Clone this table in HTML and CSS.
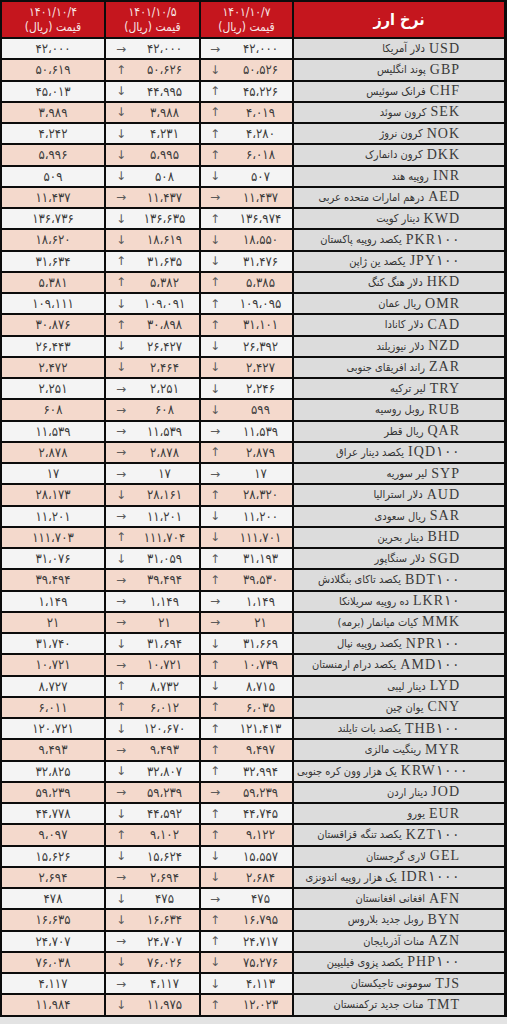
FILE: index.html
```html
<!DOCTYPE html>
<html lang="fa">
<head>
<meta charset="utf-8">
<title>نرخ ارز</title>
<link rel="stylesheet" href="styles.css">
</head>
<body>
<div class="board">
  <div class="row head">
    <div class="h"><span>۱۴۰۱/۱۰/۴</span><span class="sub">قیمت (ریال)</span></div>
    <div class="h"><span>۱۴۰۱/۱۰/۵</span><span class="sub">قیمت (ریال)</span></div>
    <div class="h"><span>۱۴۰۱/۱۰/۷</span><span class="sub">قیمت (ریال)</span></div>
    <div class="h title">نرخ ارز</div>
  </div>
  <div class="row odd"><div class="c v">۴۲،۰۰۰</div><div class="c a a2"><span class="ar">→</span><span class="n">۴۲،۰۰۰</span></div><div class="c a a3"><span class="ar">→</span><span class="n">۴۲،۰۰۰</span></div><div class="c name"><span class="code">USD</span><span class="fa">دلار آمریکا</span></div></div>
  <div class="row even"><div class="c v">۵۰،۶۱۹</div><div class="c a a2"><span class="ar">↑</span><span class="n">۵۰،۶۲۶</span></div><div class="c a a3"><span class="ar">↓</span><span class="n">۵۰،۵۲۶</span></div><div class="c name"><span class="code">GBP</span><span class="fa">پوند انگلیس</span></div></div>
  <div class="row odd"><div class="c v">۴۵،۰۱۳</div><div class="c a a2"><span class="ar">↓</span><span class="n">۴۴،۹۹۵</span></div><div class="c a a3"><span class="ar">↑</span><span class="n">۴۵،۲۲۶</span></div><div class="c name"><span class="code">CHF</span><span class="fa">فرانک سوئیس</span></div></div>
  <div class="row even"><div class="c v">۳،۹۸۹</div><div class="c a a2"><span class="ar">↓</span><span class="n">۳،۹۸۸</span></div><div class="c a a3"><span class="ar">↑</span><span class="n">۴،۰۱۹</span></div><div class="c name"><span class="code">SEK</span><span class="fa">کرون سوئد</span></div></div>
  <div class="row odd"><div class="c v">۴،۲۴۲</div><div class="c a a2"><span class="ar">↓</span><span class="n">۴،۲۳۱</span></div><div class="c a a3"><span class="ar">↑</span><span class="n">۴،۲۸۰</span></div><div class="c name"><span class="code">NOK</span><span class="fa">کرون نروژ</span></div></div>
  <div class="row even"><div class="c v">۵،۹۹۶</div><div class="c a a2"><span class="ar">↓</span><span class="n">۵،۹۹۵</span></div><div class="c a a3"><span class="ar">↑</span><span class="n">۶،۰۱۸</span></div><div class="c name"><span class="code">DKK</span><span class="fa">کرون دانمارک</span></div></div>
  <div class="row odd"><div class="c v">۵۰۹</div><div class="c a a2"><span class="ar">↓</span><span class="n">۵۰۸</span></div><div class="c a a3"><span class="ar">↓</span><span class="n">۵۰۷</span></div><div class="c name"><span class="code">INR</span><span class="fa">روپیه هند</span></div></div>
  <div class="row even"><div class="c v">۱۱،۴۳۷</div><div class="c a a2"><span class="ar">→</span><span class="n">۱۱،۴۳۷</span></div><div class="c a a3"><span class="ar">→</span><span class="n">۱۱،۴۳۷</span></div><div class="c name"><span class="code">AED</span><span class="fa">درهم امارات متحده عربی</span></div></div>
  <div class="row odd"><div class="c v">۱۳۶،۷۳۶</div><div class="c a a2"><span class="ar">↓</span><span class="n">۱۳۶،۶۳۵</span></div><div class="c a a3"><span class="ar">↑</span><span class="n">۱۳۶،۹۷۴</span></div><div class="c name"><span class="code">KWD</span><span class="fa">دینار کویت</span></div></div>
  <div class="row even"><div class="c v">۱۸،۶۲۰</div><div class="c a a2"><span class="ar">↓</span><span class="n">۱۸،۶۱۹</span></div><div class="c a a3"><span class="ar">↓</span><span class="n">۱۸،۵۵۰</span></div><div class="c name"><span class="code">PKR۱۰۰</span><span class="fa">یکصد روپیه پاکستان</span></div></div>
  <div class="row odd"><div class="c v">۳۱،۶۳۴</div><div class="c a a2"><span class="ar">↑</span><span class="n">۳۱،۶۳۵</span></div><div class="c a a3"><span class="ar">↓</span><span class="n">۳۱،۴۷۶</span></div><div class="c name"><span class="code">JPY۱۰۰</span><span class="fa">یکصد ین ژاپن</span></div></div>
  <div class="row even"><div class="c v">۵،۳۸۱</div><div class="c a a2"><span class="ar">↑</span><span class="n">۵،۳۸۲</span></div><div class="c a a3"><span class="ar">↑</span><span class="n">۵،۳۸۵</span></div><div class="c name"><span class="code">HKD</span><span class="fa">دلار هنگ کنگ</span></div></div>
  <div class="row odd"><div class="c v">۱۰۹،۱۱۱</div><div class="c a a2"><span class="ar">↓</span><span class="n">۱۰۹،۰۹۱</span></div><div class="c a a3"><span class="ar">↑</span><span class="n">۱۰۹،۰۹۵</span></div><div class="c name"><span class="code">OMR</span><span class="fa">ریال عمان</span></div></div>
  <div class="row even"><div class="c v">۳۰،۸۷۶</div><div class="c a a2"><span class="ar">↑</span><span class="n">۳۰،۸۹۸</span></div><div class="c a a3"><span class="ar">↑</span><span class="n">۳۱،۱۰۱</span></div><div class="c name"><span class="code">CAD</span><span class="fa">دلار کانادا</span></div></div>
  <div class="row odd"><div class="c v">۲۶،۴۴۳</div><div class="c a a2"><span class="ar">↓</span><span class="n">۲۶،۴۲۷</span></div><div class="c a a3"><span class="ar">↓</span><span class="n">۲۶،۳۹۲</span></div><div class="c name"><span class="code">NZD</span><span class="fa">دلار نیوزیلند</span></div></div>
  <div class="row even"><div class="c v">۲،۴۷۲</div><div class="c a a2"><span class="ar">↓</span><span class="n">۲،۴۶۴</span></div><div class="c a a3"><span class="ar">↓</span><span class="n">۲،۴۲۷</span></div><div class="c name"><span class="code">ZAR</span><span class="fa">راند افریقای جنوبی</span></div></div>
  <div class="row odd"><div class="c v">۲،۲۵۱</div><div class="c a a2"><span class="ar">→</span><span class="n">۲،۲۵۱</span></div><div class="c a a3"><span class="ar">↓</span><span class="n">۲،۲۴۶</span></div><div class="c name"><span class="code">TRY</span><span class="fa">لیر ترکیه</span></div></div>
  <div class="row even"><div class="c v">۶۰۸</div><div class="c a a2"><span class="ar">→</span><span class="n">۶۰۸</span></div><div class="c a a3"><span class="ar">↓</span><span class="n">۵۹۹</span></div><div class="c name"><span class="code">RUB</span><span class="fa">روبل روسیه</span></div></div>
  <div class="row odd"><div class="c v">۱۱،۵۳۹</div><div class="c a a2"><span class="ar">→</span><span class="n">۱۱،۵۳۹</span></div><div class="c a a3"><span class="ar">→</span><span class="n">۱۱،۵۳۹</span></div><div class="c name"><span class="code">QAR</span><span class="fa">ریال قطر</span></div></div>
  <div class="row even"><div class="c v">۲،۸۷۸</div><div class="c a a2"><span class="ar">→</span><span class="n">۲،۸۷۸</span></div><div class="c a a3"><span class="ar">↑</span><span class="n">۲،۸۷۹</span></div><div class="c name"><span class="code">IQD۱۰۰</span><span class="fa">یکصد دینار عراق</span></div></div>
  <div class="row odd"><div class="c v">۱۷</div><div class="c a a2"><span class="ar">→</span><span class="n">۱۷</span></div><div class="c a a3"><span class="ar">→</span><span class="n">۱۷</span></div><div class="c name"><span class="code">SYP</span><span class="fa">لیر سوریه</span></div></div>
  <div class="row even"><div class="c v">۲۸،۱۷۳</div><div class="c a a2"><span class="ar">↓</span><span class="n">۲۸،۱۶۱</span></div><div class="c a a3"><span class="ar">↑</span><span class="n">۲۸،۳۲۰</span></div><div class="c name"><span class="code">AUD</span><span class="fa">دلار استرالیا</span></div></div>
  <div class="row odd"><div class="c v">۱۱،۲۰۱</div><div class="c a a2"><span class="ar">→</span><span class="n">۱۱،۲۰۱</span></div><div class="c a a3"><span class="ar">↓</span><span class="n">۱۱،۲۰۰</span></div><div class="c name"><span class="code">SAR</span><span class="fa">ریال سعودی</span></div></div>
  <div class="row even"><div class="c v">۱۱۱،۷۰۳</div><div class="c a a2"><span class="ar">↑</span><span class="n">۱۱۱،۷۰۴</span></div><div class="c a a3"><span class="ar">↓</span><span class="n">۱۱۱،۷۰۱</span></div><div class="c name"><span class="code">BHD</span><span class="fa">دینار بحرین</span></div></div>
  <div class="row odd"><div class="c v">۳۱،۰۷۶</div><div class="c a a2"><span class="ar">↓</span><span class="n">۳۱،۰۵۹</span></div><div class="c a a3"><span class="ar">↑</span><span class="n">۳۱،۱۹۳</span></div><div class="c name"><span class="code">SGD</span><span class="fa">دلار سنگاپور</span></div></div>
  <div class="row even"><div class="c v">۳۹،۴۹۴</div><div class="c a a2"><span class="ar">→</span><span class="n">۳۹،۴۹۴</span></div><div class="c a a3"><span class="ar">↑</span><span class="n">۳۹،۵۳۰</span></div><div class="c name"><span class="code">BDT۱۰۰</span><span class="fa">یکصد تاکای بنگلادش</span></div></div>
  <div class="row odd"><div class="c v">۱،۱۴۹</div><div class="c a a2"><span class="ar">→</span><span class="n">۱،۱۴۹</span></div><div class="c a a3"><span class="ar">→</span><span class="n">۱،۱۴۹</span></div><div class="c name"><span class="code">LKR۱۰</span><span class="fa">ده روپیه سریلانکا</span></div></div>
  <div class="row even"><div class="c v">۲۱</div><div class="c a a2"><span class="ar">→</span><span class="n">۲۱</span></div><div class="c a a3"><span class="ar">→</span><span class="n">۲۱</span></div><div class="c name"><span class="code">MMK</span><span class="fa">کیات میانمار (برمه)</span></div></div>
  <div class="row odd"><div class="c v">۳۱،۷۴۰</div><div class="c a a2"><span class="ar">↓</span><span class="n">۳۱،۶۹۴</span></div><div class="c a a3"><span class="ar">↓</span><span class="n">۳۱،۶۶۹</span></div><div class="c name"><span class="code">NPR۱۰۰</span><span class="fa">یکصد روپیه نپال</span></div></div>
  <div class="row even"><div class="c v">۱۰،۷۲۱</div><div class="c a a2"><span class="ar">→</span><span class="n">۱۰،۷۲۱</span></div><div class="c a a3"><span class="ar">↑</span><span class="n">۱۰،۷۳۹</span></div><div class="c name"><span class="code">AMD۱۰۰</span><span class="fa">یکصد درام ارمنستان</span></div></div>
  <div class="row odd"><div class="c v">۸،۷۲۷</div><div class="c a a2"><span class="ar">↑</span><span class="n">۸،۷۳۲</span></div><div class="c a a3"><span class="ar">↓</span><span class="n">۸،۷۱۵</span></div><div class="c name"><span class="code">LYD</span><span class="fa">دینار لیبی</span></div></div>
  <div class="row even"><div class="c v">۶،۰۱۱</div><div class="c a a2"><span class="ar">↑</span><span class="n">۶،۰۱۲</span></div><div class="c a a3"><span class="ar">↑</span><span class="n">۶،۰۳۵</span></div><div class="c name"><span class="code">CNY</span><span class="fa">یوان چین</span></div></div>
  <div class="row odd"><div class="c v">۱۲۰،۷۲۱</div><div class="c a a2"><span class="ar">↓</span><span class="n">۱۲۰،۶۷۰</span></div><div class="c a a3"><span class="ar">↑</span><span class="n">۱۲۱،۴۱۳</span></div><div class="c name"><span class="code">THB۱۰۰</span><span class="fa">یکصد بات تایلند</span></div></div>
  <div class="row even"><div class="c v">۹،۴۹۳</div><div class="c a a2"><span class="ar">→</span><span class="n">۹،۴۹۳</span></div><div class="c a a3"><span class="ar">↑</span><span class="n">۹،۴۹۷</span></div><div class="c name"><span class="code">MYR</span><span class="fa">رینگیت مالزی</span></div></div>
  <div class="row odd"><div class="c v">۳۲،۸۲۵</div><div class="c a a2"><span class="ar">↓</span><span class="n">۳۲،۸۰۷</span></div><div class="c a a3"><span class="ar">↑</span><span class="n">۳۲،۹۹۴</span></div><div class="c name"><span class="code">KRW۱۰۰۰</span><span class="fa">یک هزار وون کره جنوبی</span></div></div>
  <div class="row even"><div class="c v">۵۹،۲۳۹</div><div class="c a a2"><span class="ar">→</span><span class="n">۵۹،۲۳۹</span></div><div class="c a a3"><span class="ar">→</span><span class="n">۵۹،۲۳۹</span></div><div class="c name"><span class="code">JOD</span><span class="fa">دینار اردن</span></div></div>
  <div class="row odd"><div class="c v">۴۴،۷۷۸</div><div class="c a a2"><span class="ar">↓</span><span class="n">۴۴،۵۹۲</span></div><div class="c a a3"><span class="ar">↑</span><span class="n">۴۴،۷۴۵</span></div><div class="c name"><span class="code">EUR</span><span class="fa">یورو</span></div></div>
  <div class="row even"><div class="c v">۹،۰۹۷</div><div class="c a a2"><span class="ar">↑</span><span class="n">۹،۱۰۲</span></div><div class="c a a3"><span class="ar">↑</span><span class="n">۹،۱۲۲</span></div><div class="c name"><span class="code">KZT۱۰۰</span><span class="fa">یکصد تنگه قزاقستان</span></div></div>
  <div class="row odd"><div class="c v">۱۵،۶۲۶</div><div class="c a a2"><span class="ar">↓</span><span class="n">۱۵،۶۲۴</span></div><div class="c a a3"><span class="ar">↓</span><span class="n">۱۵،۵۵۷</span></div><div class="c name"><span class="code">GEL</span><span class="fa">لاری گرجستان</span></div></div>
  <div class="row even"><div class="c v">۲،۶۹۴</div><div class="c a a2"><span class="ar">→</span><span class="n">۲،۶۹۴</span></div><div class="c a a3"><span class="ar">↓</span><span class="n">۲،۶۸۴</span></div><div class="c name"><span class="code">IDR۱۰۰۰</span><span class="fa">یک هزار روپیه اندونزی</span></div></div>
  <div class="row odd"><div class="c v">۴۷۸</div><div class="c a a2"><span class="ar">↓</span><span class="n">۴۷۵</span></div><div class="c a a3"><span class="ar">→</span><span class="n">۴۷۵</span></div><div class="c name"><span class="code">AFN</span><span class="fa">افغانی افغانستان</span></div></div>
  <div class="row even"><div class="c v">۱۶،۶۳۵</div><div class="c a a2"><span class="ar">↓</span><span class="n">۱۶،۶۳۴</span></div><div class="c a a3"><span class="ar">↑</span><span class="n">۱۶،۷۹۵</span></div><div class="c name"><span class="code">BYN</span><span class="fa">روبل جدید بلاروس</span></div></div>
  <div class="row odd"><div class="c v">۲۴،۷۰۷</div><div class="c a a2"><span class="ar">→</span><span class="n">۲۴،۷۰۷</span></div><div class="c a a3"><span class="ar">↑</span><span class="n">۲۴،۷۱۷</span></div><div class="c name"><span class="code">AZN</span><span class="fa">منات آذربایجان</span></div></div>
  <div class="row even"><div class="c v">۷۶،۰۳۸</div><div class="c a a2"><span class="ar">↓</span><span class="n">۷۶،۰۲۶</span></div><div class="c a a3"><span class="ar">↓</span><span class="n">۷۵،۲۷۶</span></div><div class="c name"><span class="code">PHP۱۰۰</span><span class="fa">یکصد پزوی فیلیپین</span></div></div>
  <div class="row odd"><div class="c v">۴،۱۱۷</div><div class="c a a2"><span class="ar">→</span><span class="n">۴،۱۱۷</span></div><div class="c a a3"><span class="ar">↓</span><span class="n">۴،۱۱۳</span></div><div class="c name"><span class="code">TJS</span><span class="fa">سومونی تاجیکستان</span></div></div>
  <div class="row even"><div class="c v">۱۱،۹۸۴</div><div class="c a a2"><span class="ar">↓</span><span class="n">۱۱،۹۷۵</span></div><div class="c a a3"><span class="ar">↑</span><span class="n">۱۲،۰۲۳</span></div><div class="c name"><span class="code">TMT</span><span class="fa">منات جدید ترکمنستان</span></div></div>
</div>
</body>
</html>
```

FILE: styles.css
```css
html, body {
  margin: 0;
  padding: 0;
}
body {
  background: #e3e3e3;
  width: 507px;
  font-family: "DejaVu Sans Condensed", "DejaVu Sans", sans-serif;
  color: #3b3b3b;
}
.board {
  display: flex;
  flex-direction: column;
  gap: 2px;
  background: #0c0c0c;
  padding: 2px 3px 2px 2px;
}
.row {
  display: grid;
  grid-template-columns: 102px 93px 91px 210px;
  gap: 2px;
  height: 19.25px;
}
.row.head {
  height: 35px;
}
.h {
  background: #c5161e;
  color: #f8e6e6;
  display: flex;
  flex-direction: column;
  align-items: center;
  justify-content: center;
  font-size: 12px;
  line-height: 15px;
  direction: rtl;
}
.h .sub {
  font-size: 12px;
}
.h.title {
  color: #ffffff;
  font-weight: bold;
  font-size: 16px;
}
.c {
  display: flex;
  align-items: center;
  font-size: 13px;
  line-height: 1;
  overflow: hidden;
}
.odd .c { background: #f4f4f4; }
.even .c { background: #f4d9cc; }
.row .c.name { background: #dcdcdc; }
.v {
  justify-content: center;
  direction: ltr;
}
.a .ar {
  flex: 0 0 auto;
  text-align: center;
  color: #5a5a5a;
  font-family: "DejaVu Sans", sans-serif;
  font-size: 12px;
}
.a2 .ar { width: 30px; }
.a3 .ar { width: 28px; }
.a .n {
  flex: 1 1 auto;
  text-align: center;
  direction: ltr;
}
.a2 .n { padding-right: 6px; }
.name {
  direction: rtl;
  justify-content: flex-start;
  padding-left: 3px;
  font-size: 11px;
  color: #333;
  white-space: nowrap;
}
.name::before {
  content: "";
  flex: 0 1 44px;
  min-width: 0;
}
.name .code,
.name .fa {
  flex: 0 0 auto;
}
.code {
  font-family: "Liberation Serif", serif;
  font-size: 14px;
  letter-spacing: 1px;
  margin-left: 4px;
  color: #3a3a3a;
}
```
